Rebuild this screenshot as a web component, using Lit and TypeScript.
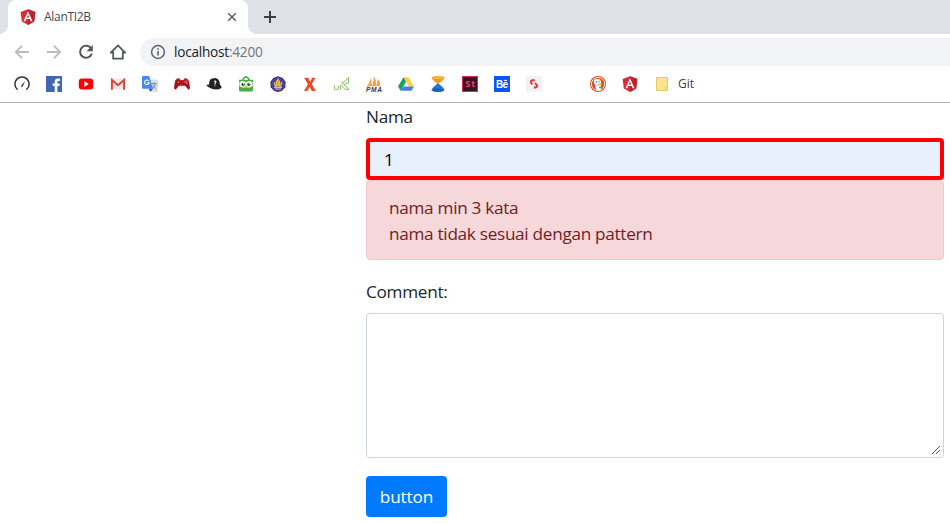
import { LitElement, html, css, svg } from "lit";
import { customElement } from "lit/decorators.js";

const angular = svg`
  <path d="M8 0.2 L15.4 2.9 L14.2 12.6 L8 16 L1.8 12.6 L0.6 2.9Z" fill="#dd2c36"/>
  <path d="M8 0.2 L15.4 2.9 L14.2 12.6 L8 16Z" fill="#b9242f"/>
  <path d="M8 2.2 L12.5 12.2 H10.7 L9.8 10 H6.2 L5.3 12.2 H3.5Z M8 5.5 L6.8 8.4 H9.2Z" fill="#fff" fill-rule="evenodd"/>`;

const bookmarks = [
  svg`<path d="M3.2 13.3 A7.1 7.1 0 1 1 12.8 13.3" fill="none" stroke="#303236" stroke-width="1.5" stroke-linecap="round"/>
      <path d="M7.1 9.7 L11.2 5.1 L8.7 10.6 A1 1 0 0 1 7.1 9.7Z" fill="#303236"/>`,
  svg`<rect width="16" height="16" fill="#4267b2"/>
      <path d="M8.7 16 V10 H6.7 V7.4 H8.7 V5.8 C8.7 3.7 10 2.5 12 2.5 H13.9 V4.9 H12.7 C11.7 4.9 11.4 5.3 11.4 6.1 V7.4 H13.8 L13.4 10 H11.4 V16Z" fill="#fff"/>`,
  svg`<rect x=".8" y="2.4" width="14.4" height="11.2" rx="3" fill="#f00"/><path d="M6.4 5.3 L10.8 8 L6.4 10.7Z" fill="#fff"/>`,
  svg`<rect x="1" y="2.6" width="14" height="11.2" rx="1" fill="#eceaea"/>
      <path d="M3 12 L8 7.6 L13 12" fill="none" stroke="#d2d0d0" stroke-width=".7"/>
      <path d="M1.9 13.8 V4 L8 9.2 L14.1 4 V13.8" fill="none" stroke="#dc4437" stroke-width="2"/>`,
  svg`<path d="M6 3.6 H15 A1 1 0 0 1 16 4.6 V15 A1 1 0 0 1 15 16 H9.8Z" fill="#dcdfe1"/>
      <path d="M9.7 7.6 H14.6 M12.1 6.5 V7.6 M13.7 7.7 Q12.8 11 9.8 12.7 M10.8 8.8 Q12 11.6 14.3 12.8" fill="none" stroke="#71879b" stroke-width=".9"/>
      <path d="M1 0 H7.2 L11 12.8 H1 A1 1 0 0 1 0 11.8 V1 A1 1 0 0 1 1 0Z" fill="#4688f1"/>
      <path d="M6.7 12.8 H11 L8.4 16Z" fill="#3158b5"/>
      <path d="M6.8 4.9 A2.3 2.3 0 1 0 7.2 6.7 H5" fill="none" stroke="#fff" stroke-width="1.1"/>`,
  svg`<path d="M2.9 2.7 Q4 2 5.7 2.6 L6.5 4.1 H9.5 L10.3 2.6 Q12 2 13.1 2.7 Q14.4 3.5 15.2 6.5 L16 11.6 Q15.9 14 14.2 13.5 L11 9.8 H5 L1.8 13.5 Q.1 14 0 11.6 L.8 6.5 Q1.6 3.5 2.9 2.7Z" fill="#ac1018"/>
      <path d="M1 6.3 Q1.9 2.7 4.7 3 L6 4.9 H10 L11.3 3 Q14.1 2.7 15 6.3" fill="none" stroke="#d42d33"/>
      <circle cx="4.3" cy="6.1" r="1.8" fill="#700409"/><path d="M4.3 4.9V7.3M3.1 6.1H5.5" stroke="#e6a0a2" stroke-width=".7"/>
      <circle cx="11" cy="6" r=".6" fill="#eee"/><circle cx="12.8" cy="5.1" r=".6" fill="#eee"/><circle cx="12.8" cy="7.2" r=".6" fill="#eee"/>`,
  svg`<path d="M.3 9.2 Q1.6 8 3.1 8.7 Q2.9 2.3 7 2.4 Q9.1 1.7 11 2.5 Q13.7 4 14 8.7 Q16.5 11.1 15 12.2 Q11.5 14.7 5.8 12.8 Q2 11.5 .3 9.2Z" fill="#222"/>
      <path d="M8 5.4 Q9.9 4.4 9.8 6.2 Q9.6 7 8.9 7.6 V8.4 M8.9 9.4V10.2" fill="none" stroke="#fff" stroke-width="1.1"/>`,
  svg`<path d="M4.5 4 Q8 -2.4 11.5 4" fill="none" stroke="#419e40" stroke-width="1.4"/>
      <path d="M1 3.7 H15 V14 Q15 15.6 13.3 15.6 H2.7 Q1 15.6 1 14Z" fill="#46ae45"/>
      <path d="M1.3 6 Q4.8 3.9 8 6.2 Q11.2 3.9 14.7 6 V10.3 Q11 12.8 8 11 Q5 12.8 1.3 10.3Z" fill="#d9efcb"/>
      <circle cx="4.7" cy="8.1" r="2.5" fill="#fff"/><circle cx="11.3" cy="8.1" r="2.5" fill="#fff"/>
      <circle cx="5.1" cy="8.3" r="1.6" fill="#244b2a"/><circle cx="10.9" cy="8.3" r="1.6" fill="#244b2a"/>
      <circle cx="5.5" cy="7.7" r=".6" fill="#fff"/><circle cx="11.3" cy="7.7" r=".6" fill="#fff"/>
      <path d="M6.6 10.3 L8 9.1 L9.4 10.3 L8 12.4Z" fill="#f1c22e"/>`,
  svg`<path d="M8 .2 L12.8 1.9 L15.7 6.1 L15.3 11.2 L11.8 15 L8 15.9 L4.2 15 L.7 11.2 L.3 6.1 L3.2 1.9Z" fill="#353382"/>
      <circle cx="8" cy="8.2" r="6" fill="none" stroke="#777ac0" stroke-width=".8" stroke-dasharray="1 .7"/>
      <circle cx="8" cy="8.2" r="4.5" fill="#6b5c83"/>
      <path d="M8 2.2 Q11 5.8 10 10.3 H6 Q5 5.8 8 2.2Z" fill="#efc44e"/>
      <path d="M4.2 6 Q4.1 9 6.2 10.4 M11.8 6 Q11.9 9 9.8 10.4 M4 11.4 H12 M5 13 H11" fill="none" stroke="#dfc18a" stroke-width="1.1"/>
      <path d="M8 4.5V10" stroke="#c97136" stroke-width=".8"/>`,
  svg`<path d="M2.1 1.7 H6.1 L8.1 5.5 L10.4 1.7 H13.7 L9.8 8 L13.8 14.9 H9.8 L7.7 10.9 L5.2 14.9 H2 L6 8.3Z" fill="#e94e22"/>`,
  svg`<path d="M.5 9.5 V12.5 Q.5 13.5 1.5 13.5 H3 Q4.3 13.5 4.3 12.3 V9.5 M6.4 13.8 V9.5 H7.5 L11 13.4 H15 M15 13.4 L9.5 8.5 L14.5 7 V1.5 L10.7 5.7 L7.8 6.5 L9.5 8.5" fill="none" stroke="#79b54b" stroke-width=".9"/>`,
  svg`<path d="M.8 10 Q4.1 7.1 4.6 2.3 Q6.4 6.4 5.6 10Z M6 10 Q8.1 5.7 7.6 .3 Q11 5.4 9.9 10Z M10.2 10 Q12 6 11.2 3 Q15.2 6.1 13.9 10Z" fill="#f6a044"/>
      <path d="M1 10.2 Q8 8.6 15.2 10" fill="none" stroke="#e7a96b" stroke-width=".8"/>
      <text class="pma" x="0" y="15.8" textLength="16">PMA</text>`,
  svg`<path d="M5.5 1.2 H10.6 L16 10.4 H10.8Z" fill="#ffd044"/><path d="M5.5 1.2 L8 5.7 L2.7 14.8 L0 10.4Z" fill="#16a166"/>
      <path d="M5.4 10.4 H16 L13.4 14.8 H2.7Z" fill="#447fe6"/>`,
  svg`<path d="M1.5 1.6 Q2 0 8 0 Q14 0 14.5 1.6 Q14.2 3.8 8 8.1 Q1.8 3.8 1.5 1.6Z" fill="#f69820"/><ellipse cx="8" cy="1.8" rx="5.5" ry="1.2" fill="#fbb441"/>
      <path d="M8 7.3 Q14.4 12 14.5 14.2 Q14 16 8 16 Q2 16 1.5 14.2 Q1.6 12 8 7.3Z" fill="#2477cf"/><ellipse cx="8" cy="13.7" rx="5.2" ry="1.5" fill="#1764b7"/>`,
  svg`<rect x=".5" y=".5" width="15" height="15" fill="#381522" stroke="#d82b56"/><text class="st" x="3.3" y="11.3" textLength="9.8">St</text>`,
  svg`<rect width="16" height="16" fill="#0757f7"/><text class="be" x="2" y="11.8" textLength="12">Be</text><path d="M9.9 4.4 H13.2" stroke="#fff"/>`,
  svg`<rect width="16" height="16" fill="#f2f2f3"/><path d="M8.9 4.3 H6.6 Q4.9 4.3 4.9 6 V6.6 L6.5 8.2 M9 7.3 L11 9.2 V9.8 Q11 11.4 9.4 11.4 H7.8" fill="none" stroke="#e33a43" stroke-width="2"/>`,
  svg``,
  svg`<circle cx="8" cy="8" r="8" fill="#dc4b25"/><circle cx="8" cy="8" r="6.6" fill="none" stroke="#fff" stroke-width=".9"/>
      <path d="M4.6 3.4 Q8.9 1.6 11 5.1 L10.8 9.4 L11.2 13.4 Q7.9 14.9 6 13.5 L5 8.7 Q3 5.3 4.6 3.4Z" fill="#fff"/>
      <circle cx="6.5" cy="6" r=".7" fill="#294c75"/><circle cx="9.1" cy="5.6" r=".6" fill="#294c75"/>
      <path d="M7.4 7.8 Q10.3 6.7 12.4 8 Q10.8 9.5 8.1 9.5Z" fill="#f7b930"/><path d="M9 11 L12.3 10 V13 L9.4 12.1Z" fill="#57a846"/>`,
  angular,
];

@customElement("app-root")
export class AppRoot extends LitElement {
  static styles = css`
    :host { display: flex; flex-direction: column; height: 523px; overflow: hidden; background: #fff; color: #212529; font-family: "Open Sans", "Noto Sans", sans-serif; }
    * { box-sizing: border-box; }
    svg { display: block; flex: none; }
    .tabs { display: flex; height: 34px; background: #dee1e6; padding-left: 8px; flex: none; }
    .tab { position: relative; display: flex; align-items: center; width: 240px; height: 34px; padding: 0 10px 0 12px; background: #fff; border-radius: 8px 8px 0 0; }
    .tab::before, .tab::after { content: ""; position: absolute; bottom: 0; width: 8px; height: 8px; }
    .tab::before { left: -8px; background: radial-gradient(circle at 0 0, transparent 7.5px, #fff 8px); }
    .tab::after { right: -8px; background: radial-gradient(circle at 100% 0, transparent 7.5px, #fff 8px); }
    .title { flex: 1; margin-left: 8px; font-size: 12px; line-height: 16px; letter-spacing: -0.3px; color: #45494d; }
    .new { margin: 9px 0 0 14px; }
    .toolbar { display: flex; align-items: center; gap: 16px; height: 35px; padding: 1px 0 0 14px; flex: none; }
    .address { display: flex; align-items: center; flex: 1; height: 28px; margin-left: -2px; padding-left: 10px; border-radius: 14px 0 0 14px; background: #f1f3f4; }
    .url { margin-left: 8px; font-size: 13.6px; line-height: 18px; letter-spacing: -0.22px; color: #202124; }
    .port { color: #73777b; }
    .marks { display: flex; align-items: center; gap: 16px; height: 34px; padding: 0 0 4px 14px; border-bottom: 1px solid #b5b5b5; flex: none; }
    .folder { display: flex; align-items: center; gap: 8px; font-size: 12px; line-height: 16px; color: #3c4043; }
    .pma { font: italic 700 6.6px "Liberation Sans", sans-serif; fill: #34355f; }
    .st { font: 700 9px "Open Sans", sans-serif; fill: #ef4478; }
    .be { font: 700 10px "Liberation Sans", sans-serif; fill: #fff; }
    .form { display: flex; flex-direction: column; width: 578px; margin-left: 366px; padding-top: 1px; font-size: 17.2px; line-height: 26px; letter-spacing: -0.3px; }
    .label { height: 26px; margin-bottom: 8px; }
    .input { height: 42px; border: 4px solid #f00; border-radius: 4px; background: #e8effd; color: #000; padding: 5px 14px 3px; }
    .alert { height: 80px; padding: 14px 22px; border: 1px solid #f5c6cb; border-radius: 4px; background: #f6d7da; color: #721c24; margin-bottom: 19px; }
    .area { display: flex; align-items: flex-end; justify-content: flex-end; height: 145px; border: 1px solid #ced4da; border-radius: 4px; padding: 2px; }
    .btn { align-self: flex-start; width: 81px; height: 41px; margin-top: 18px; border: 0; border-radius: 4px; background: #007bff; color: #fff; font: inherit; letter-spacing: -0.15px; padding: 0; }
  `;

  render() {
    return html`
      <div class="tabs">
        <div class="tab">
          <svg width="16" height="16" viewBox="0 0 16 16">${angular}</svg>
          <span class="title">AlanTI2B</span>
          <svg width="12" height="12" viewBox="0 0 12 12"><path d="M2.2 2.2 L9.8 9.8 M9.8 2.2 L2.2 9.8" stroke="#5f6368" stroke-width="1.6"/></svg>
        </div>
        <svg class="new" width="16" height="16" viewBox="0 0 16 16"><path d="M8 2 V14 M2 8 H14" stroke="#3c4043" stroke-width="2"/></svg>
      </div>
      <div class="toolbar">
        <svg width="16" height="16" viewBox="0 0 16 16"><path d="M15 8 H2 M8.2 1.6 L1.8 8 L8.2 14.4" fill="none" stroke="#babcbe" stroke-width="1.8"/></svg>
        <svg width="16" height="16" viewBox="0 0 16 16"><path d="M1 8 H14 M7.8 1.6 L14.2 8 L7.8 14.4" fill="none" stroke="#babcbe" stroke-width="1.8"/></svg>
        <svg width="16" height="16" viewBox="0 0 16 16"><path d="M13.3 4.8 A6 6 0 1 0 13.8 9.6" fill="none" stroke="#54585d" stroke-width="2"/><path d="M14.8 1 V7.2 H8.5Z" fill="#54585d"/></svg>
        <svg width="16" height="16" viewBox="0 0 16 16"><path d="M.9 8.5 L8 1.4 L15.1 8.5 H12.8 V14.7 H3.2 V8.5Z" fill="none" stroke="#54585d" stroke-width="1.8"/></svg>
        <div class="address">
          <svg width="16" height="16" viewBox="0 0 16 16"><circle cx="8" cy="8" r="6.4" fill="none" stroke="#5f6368" stroke-width="1.5"/><path d="M8 7 V11.5 M8 4.2 V5.8" stroke="#5f6368" stroke-width="1.6"/></svg>
          <span class="url">localhost<span class="port">:4200</span></span>
        </div>
      </div>
      <div class="marks">
        ${bookmarks.map((b) => html`<svg width="16" height="16" viewBox="0 0 16 16">${b}</svg>`)}
        <div class="folder">
          <svg width="16" height="16" viewBox="0 0 16 16"><path d="M2.5 1.5 H13.5 V10.8 L12 14.5 H2.5Z" fill="#fee392" stroke="#e9c965"/><path d="M11.5 14.5 V11 H13.5 V14.5Z" fill="#fee392" stroke="#e9c965"/></svg>
          <span>Git</span>
        </div>
      </div>
      <div class="form">
        <div class="label">Nama</div>
        <div class="input">1</div>
        <div class="alert"><div>nama min 3 kata</div><div>nama tidak sesuai dengan pattern</div></div>
        <div class="label">Comment:</div>
        <div class="area"><svg width="10" height="10" viewBox="0 0 10 10"><path d="M1 9 L9 1 M5 9 L9 5" stroke="#555" stroke-width="1"/></svg></div>
        <button class="btn">button</button>
      </div>`;
  }
}
